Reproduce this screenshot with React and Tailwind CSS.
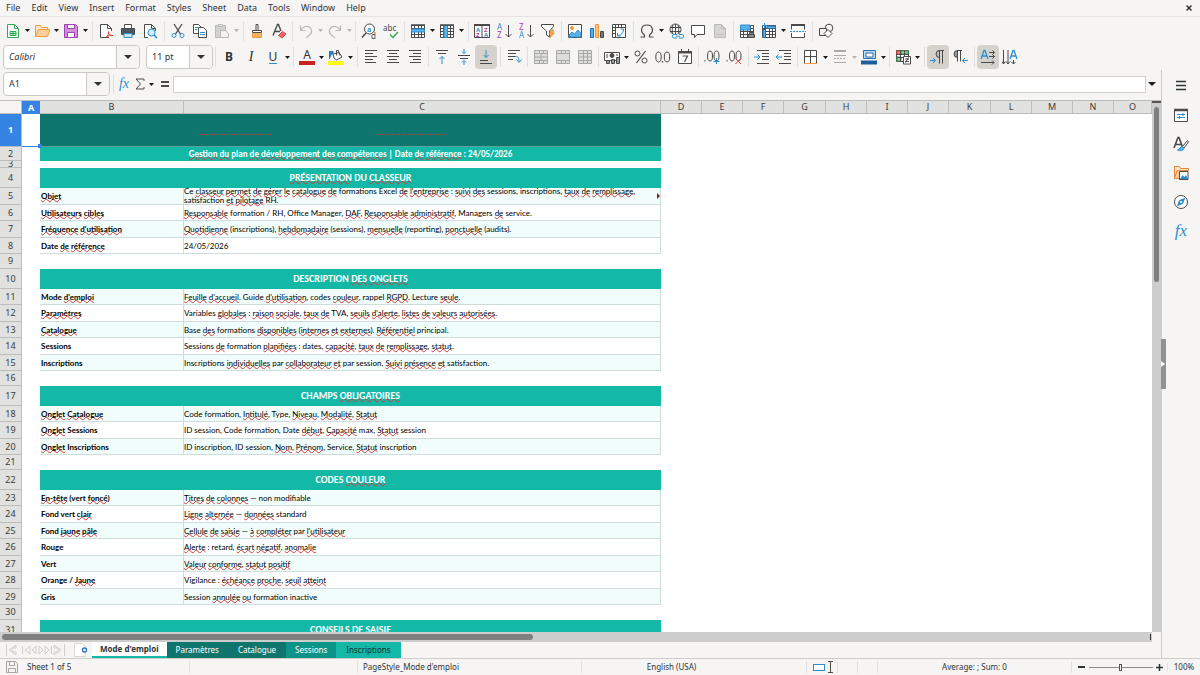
import { Fragment, useState } from "react";

const BLUE = "#2a8fd0";
const DARK = "#4a4a4a";
const GRAY = "#b9b9b7";
const ORANGE = "#ef9b3f";
const PURPLE = "#a33fb5";
const RED = "#e0403f";

const Svg = ({ children, color = DARK }) => (
  <svg viewBox="0 0 16 16" className="w-4 h-4 shrink-0" fill="none" stroke={color} strokeWidth="1">
    {children}
  </svg>
);

const Letter = ({ x, y, size = 8, color = DARK, bold, children }) => (
  <text x={x} y={y} fontSize={size} fill={color} stroke="none" fontWeight={bold ? 700 : 400} fontFamily="Noto Sans, sans-serif">
    {children}
  </text>
);

const gridLines = "M1.5 2.5h13v12h-13zM1.5 5.5h13M1.5 8.5h13M1.5 11.5h13M4.5 2.5v12M8.5 2.5v12M11.5 2.5v12";
const mergeLines = "M1.5 1.5h13v13h-13zM1.5 4.5h13M1.5 11.5h13M6.5 1.5v3M10.5 1.5v3M6.5 11.5v3M10.5 11.5v3";

const icons = {
  new: (
    <Svg color="#35a854">
      <path d="M2.5 1.5h7l4 4v9h-11z" fill="#fff" />
      <path d="M9.5 1.5v4h4" />
      <path d="M5 8.5h6v4H5zM5 10.5h6M8 8.5v4" fill="#bfe6c9" />
    </Svg>
  ),
  open: (
    <Svg color={ORANGE}>
      <path d="M1.5 13.5v-11h5l1 2h6v3" fill="#fde6c8" />
      <path d="M1.5 13.5l3-7h11.5l-2.5 7z" fill="#fbd09a" />
    </Svg>
  ),
  save: (
    <Svg color={PURPLE}>
      <path d="M1.5 1.5h11l2 2v11h-13z" fill="#cf8fdb" />
      <path d="M4.5 1.5h7v4h-7z" fill="#fff" />
      <path d="M4.5 9.5h7v5h-7z" fill="#fff" />
    </Svg>
  ),
  pdf: (
    <Svg>
      <path d="M11 14.5H2.5v-13h7l4 4V8" fill="#fff" />
      <path d="M9.5 1.5v4h4" />
      <path d="M8 14.5c2-2 3-4 2.5-6c0 3 2 4.5 4.5 4c-2-.5-5 0-7 2z" stroke={RED} />
    </Svg>
  ),
  print: (
    <Svg>
      <path d="M4.5 5V1.5h7V5" fill="#fff" />
      <path d="M1.5 5.5h13v6h-13z" fill="#4f565c" />
      <path d="M4 10.5h8v4H4z" fill="#cfe6f7" stroke={BLUE} />
    </Svg>
  ),
  preview: (
    <Svg>
      <path d="M6 14.5H2.5v-13h7l4 4V8" fill="#fff" />
      <path d="M9.5 1.5v4h4" />
      <circle cx="9.5" cy="9.5" r="3.5" fill="#d5ecfa" stroke={BLUE} />
      <path d="M12 12l3 3" stroke={BLUE} strokeWidth="1.5" />
    </Svg>
  ),
  cut: (
    <Svg>
      <path d="M4 1l6.5 10M12 1L5.5 11" strokeWidth="1.3" />
      <circle cx="4" cy="12.5" r="2" stroke={BLUE} />
      <circle cx="12" cy="12.5" r="2" stroke={BLUE} />
    </Svg>
  ),
  copy: (
    <Svg>
      <path d="M1.5 1.5h5l3 3v6h-8z" fill="#fff" />
      <path d="M6.5 4.5h5l3 3v7h-8z" fill="#fff" />
      <path d="M3 4.5h3M3 6.5h2M8 9.5h5M8 11.5h5" stroke={BLUE} />
    </Svg>
  ),
  paste: (
    <Svg color={GRAY}>
      <path d="M1.5 2.5h10v12h-10z" fill="#d0d0ce" />
      <path d="M4.5 1.5h4v2h-4z" fill="#eee" />
      <path d="M6.5 7.5h5l3 3v4h-8z" fill="#f2f2f0" />
    </Svg>
  ),
  clone: (
    <Svg>
      <path d="M7 1.5h2v6H7z" fill="#fff" />
      <path d="M3.5 7.5h9v2h-9z" fill="#fff" />
      <path d="M3.5 10v4.5h9V10M6 11.5v3M9 11.5v3" stroke={ORANGE} fill="#f7b566" />
    </Svg>
  ),
  clear: (
    <Svg>
      <path d="M2 12.5L6.5 1.5h1L10 8M4 8.5h5" strokeWidth="1.4" />
      <path d="M7.5 12.5l4-4 3.500 2.500-4 4z" fill="#f06a68" stroke={RED} />
    </Svg>
  ),
  undo: (
    <Svg color={GRAY}>
      <path d="M2.5 2.5v5h5M3 7c2-4 8-5 10-1s-1 6-5 9" strokeWidth="1.2" />
    </Svg>
  ),
  redo: (
    <Svg color={GRAY}>
      <path d="M13.5 2.5v5h-5M13 7c-2-4-8-5-10-1s1 6 5 9" strokeWidth="1.2" />
    </Svg>
  ),
  find: (
    <Svg>
      <circle cx="8.5" cy="6" r="5" fill="#fff" />
      <path d="M5 10l-4 4.5" strokeWidth="1.5" />
      <Letter x="6" y="8.5" size="7" color={BLUE} bold>a</Letter>
      <Letter x="10" y="15.5" size="8">d</Letter>
    </Svg>
  ),
  spell: (
    <Svg>
      <Letter x="0" y="8" size="8">abc</Letter>
      <path d="M7 11.5l3 3 5-5.5" stroke="#2fa84f" strokeWidth="1.3" />
    </Svg>
  ),
  row: (
    <Svg>
      <path d={gridLines} fill="#fff" />
      <path d="M1.5 6h13v3h-13z" fill="#5db1ea" stroke={BLUE} />
      <path d="M1 2h14" strokeWidth="1.5" />
    </Svg>
  ),
  col: (
    <Svg>
      <path d={gridLines} fill="#fff" />
      <path d="M5 2.5h3.5v12H5z" fill="#5db1ea" stroke={BLUE} />
      <path d="M1 2h14" strokeWidth="1.5" />
    </Svg>
  ),
  sort: (
    <Svg>
      <path d="M.5 1.5h15v13H.5zM8 1v14" fill="#fff" />
      <path d="M0 2h16" strokeWidth="2" />
      <Letter x="2" y="9" size="6" color={BLUE} bold>A</Letter>
      <Letter x="2" y="14" size="6" color={PURPLE} bold>Z</Letter>
      <Letter x="10" y="9" size="6" color={PURPLE} bold>Z</Letter>
      <Letter x="10" y="14" size="6" color={BLUE} bold>A</Letter>
    </Svg>
  ),
  az: (
    <Svg>
      <Letter x="1" y="7" size="8" color={BLUE}>A</Letter>
      <Letter x="1" y="15" size="8" color={PURPLE}>Z</Letter>
      <path d="M12.5 2v12M9.5 11l3 3 3-3" />
    </Svg>
  ),
  za: (
    <Svg>
      <Letter x="1" y="7" size="8" color={PURPLE}>Z</Letter>
      <Letter x="1" y="15" size="8" color={BLUE}>A</Letter>
      <path d="M12.5 2v12M9.5 11l3 3 3-3" />
    </Svg>
  ),
  filter: (
    <Svg>
      <path d="M1.5 1.5h12v2l-4 4.5v6l-3-2V8l-5-4.5z" fill="#fff" />
      <path d="M12 7l-3 4h2.5L9.5 15l5-5H12l2-3z" fill={ORANGE} stroke={ORANGE} />
    </Svg>
  ),
  image: (
    <Svg>
      <path d="M1.5 1.5h13v13h-13z" fill="#fff" />
      <circle cx="5" cy="5" r="1.5" fill={ORANGE} stroke={ORANGE} />
      <path d="M2 14v-2l3-3 2.5 2L11 7l3 3.5V14z" fill="#5db1ea" stroke={BLUE} />
    </Svg>
  ),
  chart: (
    <Svg>
      <path d="M1.5 5.5h3v9h-3z" fill="#5db1ea" stroke="#1f6fae" />
      <path d="M6.5 1.5h3v13h-3z" fill="#f9c079" stroke={ORANGE} />
      <path d="M11.5 8.5h3v6h-3z" fill="#777" />
    </Svg>
  ),
  pivot: (
    <Svg>
      <path d="M1.5 1.5h13v13h-13z" fill="#fff" />
      <path d="M1.5 4.5h13M4.5 1.5v13M7.5 2v2M10.5 2v2M2 7.5h2M2 10.5h2" />
      <path d="M6.5 10v3h3M12.5 8V6h-3M7 12.5c3 0 5-2 5.5-6" stroke={BLUE} />
    </Svg>
  ),
  omega: (
    <Svg>
      <path d="M1.5 14h4v-2C1 9 1.5 2 8 2s7 7 2.5 10v2h4" strokeWidth="1.2" />
    </Svg>
  ),
  link: (
    <Svg>
      <circle cx="7.5" cy="6.5" r="5.5" fill="#fff" />
      <path d="M2 4.5h11M2 8.5h11M7.5 1v11M5 2c-1 3-1 6 0 9M10 2c1 3 1 6 0 9" />
      <path d="M4 11h12v5H4z" fill="#f6f5f4" stroke="none" />
      <path d="M9 11.5H6a1.5 1.5 0 000 3.5h3M11 11.5h3a1.5 1.5 0 010 3.5h-3M8 13.2h4" stroke={BLUE} />
    </Svg>
  ),
  comment: (
    <Svg>
      <path d="M1.5 2.5h13v9H7l-2.5 3v-3h-3z" fill="#fff" />
    </Svg>
  ),
  doc: (
    <Svg color={GRAY}>
      <path d="M2.5 1.5h7l4 4v9h-11z" fill="#d6d6d4" />
      <path d="M4 11.5h8M9.5 1.5v4h4" />
    </Svg>
  ),
  range: (
    <Svg>
      <path d={gridLines} fill="#fff" />
      <path d="M1.5 2h9.5v5H1.5z" fill="#5db1ea" stroke={BLUE} />
      <path d="M9 11.5h6.5v3H9zM10.5 9.5h4v2h-4z" fill="#8a8f94" />
    </Svg>
  ),
  freeze: (
    <Svg>
      <path d={gridLines} fill="#fff" />
      <path d="M6 3h8.5v2.500H6zM2 6.5h2.500v8H2z" fill="#5db1ea" stroke="#1f6fae" />
      <path d="M3.5 0v5M1 2.5h5" stroke={BLUE} />
    </Svg>
  ),
  split: (
    <Svg>
      <path d="M1.5 6.5v-5h13v5M1.5 10v4.5h13V10" fill="#fff" />
      <path d="M1 2h14" strokeWidth="2" />
      <path d="M0 8.5h16" stroke={BLUE} strokeDasharray="2 1" />
    </Svg>
  ),
  shapes: (
    <Svg>
      <circle cx="11" cy="5" r="3.8" />
      <path d="M1.5 5.5h7v7h-7z" fill="#f6f5f4" />
      <path d="M10 6.5l4 4-4 4-4-4z" fill="#fff" />
    </Svg>
  ),
  left: <Svg><path d="M2 1.5h12M2 4.5h8M2 7.5h12M2 10.5h8M2 13.5h11" /></Svg>,
  center: <Svg><path d="M2 1.5h12M4 4.5h8M2 7.5h12M4 10.5h8M2 13.5h12" /></Svg>,
  right: <Svg><path d="M2 1.5h12M6 4.5h8M2 7.5h12M6 10.5h8M3 13.5h11" /></Svg>,
  top: (
    <Svg>
      <path d="M2 1.5h12M4 4.5h8" />
      <path d="M8 15V7.5M5.5 10L8 7.5 10.5 10" stroke={BLUE} />
    </Svg>
  ),
  middle: (
    <Svg>
      <path d="M2 6.5h12M4 9.5h8" />
      <path d="M8 0v4.5M6 2.5l2 2 2-2M8 16v-4.5M6 13.5l2-2 2 2" stroke={BLUE} />
    </Svg>
  ),
  bottom: (
    <Svg>
      <path d="M2 11.5h8M2 14.5h12" />
      <path d="M8 1v7.5M5.5 6L8 8.5 10.5 6" stroke={BLUE} />
    </Svg>
  ),
  wrap: (
    <Svg>
      <path d="M2 1.5h12M2 4.5h8M2 7.5h7M2 10.5h5" />
      <path d="M9 7.5c3 0 4 1 4 5M10.5 10.5l2.5 3 2.5-3" stroke={BLUE} />
    </Svg>
  ),
  merge1: <Svg color="#a9a9a7"><path d={mergeLines} fill="#dededc" /><path d="M1.5 8h13M8 4.5v7" /></Svg>,
  merge2: <Svg color="#a9a9a7"><path d={mergeLines} fill="#dededc" /></Svg>,
  merge3: <Svg color="#a9a9a7"><path d={mergeLines} fill="#dededc" /><path d="M1.5 8h13M6.5 4.5v7M10.5 4.5v7" /></Svg>,
  currency: (
    <Svg>
      <path d="M.5 3.5h15v8H.5z" fill="#fff" />
      <circle cx="8" cy="6.5" r="2" fill={DARK} />
      <path d="M3 5v4M13 5v2M2.5 11.5h3v3h-3zM7.5 10.5h3v4h-3zM12.5 8.5h3v6h-3z" fill="#999" />
    </Svg>
  ),
  percent: (
    <Svg>
      <circle cx="4.5" cy="4.5" r="2.5" />
      <circle cx="11.5" cy="11.5" r="2.5" />
      <path d="M12.5 2l-9 12" strokeWidth="1.2" />
    </Svg>
  ),
  number: (
    <Svg>
      <ellipse cx="3.5" cy="8" rx="2.7" ry="5" />
      <ellipse cx="12" cy="8" rx="2.7" ry="5" />
      <path d="M7.5 12v1.5" strokeWidth="1.3" />
    </Svg>
  ),
  date: (
    <Svg>
      <path d="M1.5 2.5h13v12h-13z" fill="#fff" />
      <path d="M1 3.5h14" strokeWidth="2" />
      <path d="M4.5 0v3M11.5 0v3" />
      <path d="M5.5 7h5l-3 6" strokeWidth="1.2" />
    </Svg>
  ),
  addDec: (
    <Svg>
      <ellipse cx="6" cy="7" rx="2.5" ry="5" />
      <ellipse cx="12.5" cy="7" rx="2.5" ry="5" />
      <path d="M1 11v1.5" />
      <path d="M12.5 9v6M9.5 12.5h6" stroke={BLUE} />
    </Svg>
  ),
  delDec: (
    <Svg>
      <ellipse cx="6" cy="7" rx="2.5" ry="5" />
      <ellipse cx="12.5" cy="7" rx="2.5" ry="5" />
      <path d="M1 11v1.5" />
      <path d="M9.5 9.5l5.5 5.5M15 9.5L9.5 15" stroke={RED} />
    </Svg>
  ),
  indent: (
    <Svg>
      <path d="M3 1.5h12M8 4.5h7M8 7.5h7M8 10.5h7M3 14.5h12" />
      <path d="M0 8h6M3.5 5.5L6 8l-2.5 2.5" stroke={BLUE} />
    </Svg>
  ),
  outdent: (
    <Svg>
      <path d="M3 1.5h12M8 4.5h7M8 7.5h7M8 10.5h7M3 14.5h12" />
      <path d="M0 8h6M2.5 5.5L0 8l2.5 2.5" stroke={BLUE} />
    </Svg>
  ),
  borders: (
    <Svg>
      <path d="M1.5 14.5v-13h12v13M7.5 1.5v13M1.5 7.5h12" fill="#fff" />
      <path d="M1 14.5h13" stroke={ORANGE} />
    </Svg>
  ),
  lineStyle: (
    <Svg color="#aaaaa8">
      <path d="M2 2h12" strokeWidth="2" />
      <path d="M2 6.5h12" />
      <path d="M2 9.5h12" strokeDasharray="2 1" />
      <path d="M2 13.5h12" />
    </Svg>
  ),
  lineColor: (
    <Svg color="#2b6ea8">
      <path d="M2.5 1.5h12v8h-12z" fill="#b9dcf5" />
      <path d="M5 4h7v4H5z" fill="#fff" />
      <path d="M0 11.500h16v4H0z" fill="#1c5f9c" stroke="none" />
    </Svg>
  ),
  conditional: (
    <Svg>
      <path d="M1.5 1.5h12v11h-12z" fill="#fff" />
      <path d="M2 2h4v3H2z" fill="#f7837c" stroke={RED} />
      <path d="M6 2h7v3H6zM2 8h4v4H2z" fill="#8fd19e" stroke="#35a854" />
      <path d="M5.5 1.5v11M9.5 1.5v11M1.5 5.5h12M1.5 8.5h12" />
      <path d="M8.5 7.5h7v7.5h-7z" fill="#fff" />
      <path d="M10 10h4M10 12.5h4M13.5 8.5l-3 5" />
    </Svg>
  ),
  ltr: (
    <Svg>
      <path d="M14 1.5H8.5M9.5 1.5v13M12.5 1.5v13" />
      <path d="M9.5 1.5a3.5 3.5 0 000 7z" fill="#bbb" />
      <path d="M0 11.5h5.5M3 9l2.5 2.5L3 14" stroke={BLUE} />
    </Svg>
  ),
  rtl: (
    <Svg>
      <path d="M10 1.5H5M5.5 1.5v11M8.5 1.5v11" />
      <path d="M5.5 1.5a3.5 3.5 0 000 7z" fill="#999" />
      <path d="M16 11.5h-5.5M13 9l-2.5 2.5L13 14" stroke={BLUE} />
    </Svg>
  ),
  horizontal: (
    <Svg>
      <path d="M1 10L4 1.5h1L8 10M2 7h5" stroke={BLUE} strokeWidth="1.3" />
      <path d="M9 3.5h5.500M12.5 1.5l2 2-2 2M9 7.5h5.500M12.5 5.5l2 2-2 2M1 13.5h13M12 11.5l2 2-2 2" />
    </Svg>
  ),
  vertical: (
    <Svg>
      <path d="M8 10l3-8.5h1L15 10M9 7h5" stroke={BLUE} strokeWidth="1.3" />
      <path d="M1.5 1v14M0 12.5L1.5 15l2-2.5M6 1v14M4 12.5L6 15l2-2.5M11.5 11v4M9.5 13l2 2 2-2" />
    </Svg>
  ),
};

// "|" and "||" are separators, "v" is a drop-down arrow, "x" a disabled one
const standardBar = [
  ["new", "v"], ["open", "v"], ["save", "v"], "||", "pdf", "print", "preview", "||",
  "cut", "copy", ["paste", "x"], "||", "clone", "clear", "|", ["undo", "x"], ["redo", "x"], "|",
  "find", "spell", "|", ["row", "v"], ["col", "v"], "||", "sort", "az", "za", "filter", "|",
  "image", "chart", "pivot", "||", ["omega", "v"], "link", "comment", "doc", "|",
  "range", ["freeze", "v"], "split", "||", "shapes",
];

const alignBar = [
  "||", "left", "center", "right", "|", "top", "middle", "bottom*", "||", "wrap", "|",
  "merge1", "merge2", "merge3", "|", ["currency", "v"], "percent", "number", "date", "|",
  "addDec", "delDec", "||", "indent", "outdent", "|", ["borders", "v"], ["lineStyle", "x"],
  ["lineColor", "v"], "|", ["conditional", "v"], "||", "ltr*", "rtl", "||", "horizontal*", "vertical",
];

function Arrow({ disabled }) {
  return (
    <span className="w-[7px] flex justify-center">
      <svg viewBox="0 0 5 3" className="w-[5px] h-[3px]" fill={disabled ? "#b5b5b3" : "#1a1a1a"}>
        <path d="M0 0h5L2.5 3z" />
      </svg>
    </span>
  );
}

function Sep({ wide }) {
  return (
    <span className={`${wide ? "w-1.5" : "w-[5px]"} h-5 flex justify-center shrink-0`}>
      <span className="w-px h-full bg-[#e1dfdd]" />
    </span>
  );
}

function Tool({ name, arrow, children }) {
  const active = name.endsWith("*");
  const key = name.replace("*", "");
  return (
    <button type="button" aria-label={key} className="flex items-center shrink-0">
      <span className={`w-[22px] h-6 rounded flex items-center justify-center ${active ? "bg-[#d5d1cd]" : ""}`}>
        {children || icons[key]}
      </span>
      {arrow && <Arrow disabled={arrow === "x"} />}
    </button>
  );
}

function Tools({ items }) {
  return items.map((item, i) => {
    if (item === "|" || item === "||") return <Sep key={i} wide={item === "||"} />;
    if (Array.isArray(item)) return <Tool key={i} name={item[0]} arrow={item[1]} />;
    return <Tool key={i} name={item} />;
  });
}

function Combo({ label, value, className, inputClass }) {
  const [text, setText] = useState(value);
  return (
    <div className={`h-6 shrink-0 flex rounded border border-[#cdc7c2] bg-white overflow-hidden ${className}`}>
      <input
        aria-label={label}
        value={text}
        onChange={(e) => setText(e.target.value)}
        className={`min-w-0 flex-1 pl-[5px] text-[9px] text-[#2e3436] outline-none ${inputClass || ""}`}
      />
      <button type="button" aria-label={`${label} list`} className="w-[23px] border-l border-[#cdc7c2] bg-[#f6f5f4] flex items-center justify-center">
        <svg viewBox="0 0 8 4" className="w-2 h-1" fill="#2e3436">
          <path d="M0 0h8L4 4z" />
        </svg>
      </button>
    </div>
  );
}

// words in [brackets] are flagged by the spell checker
const rows = [
  { n: 1, type: "banner", h: "h-[33px]" },
  { n: 2, type: "sub", h: "h-[14px]", text: "[Gestion] [du] plan [de] [développement] [des] [compétences] | Date [de] [référence] : 24/05/2026" },
  { n: 3, type: "gap", h: "h-[7px]" },
  { n: 4, type: "title", h: "h-5", text: "[PRÉSENTATION] DU [CLASSEUR]" },
  { n: 5, h: "h-[17px]", alt: true, a: "[Objet]", more: true, b: "Ce [classeur] [permet] [de] [gérer] [le] [catalogue] [de] formations Excel [de] [l'entreprise] : [suivi] [des] sessions, inscriptions, [taux] [de] [remplissage], satisfaction [et] [pilotage] RH." },
  { n: 6, h: "h-4", a: "[Utilisateurs] [cibles]", b: "[Responsable] formation / RH, Office Manager, [DAF], [Responsable] [administratif], Managers [de] service." },
  { n: 7, h: "h-[17px]", alt: true, a: "[Fréquence] [d'utilisation]", b: "[Quotidienne] (inscriptions), [hebdomadaire] (sessions), [mensuelle] (reporting), [ponctuelle] (audits)." },
  { n: 8, h: "h-4", a: "Date [de] [référence]", b: "24/05/2026" },
  { n: 9, type: "gap", h: "h-[15px]" },
  { n: 10, type: "title", h: "h-5", text: "DESCRIPTION [DES] [ONGLETS]" },
  { n: 11, h: "h-4", alt: true, a: "Mode [d'emploi]", b: "[Feuille] [d'accueil]. Guide [d'utilisation], codes [couleur], rappel [RGPD]. Lecture [seule]." },
  { n: 12, h: "h-[17px]", a: "[Paramètres]", b: "Variables [globales] : [raison] [sociale], [taux] [de] TVA, [seuils] [d'alerte], [listes] [de] [valeurs] [autorisées]." },
  { n: 13, h: "h-4", alt: true, a: "[Catalogue]", b: "Base [des] formations [disponibles] ([internes] [et] [externes]). [Référentiel] principal." },
  { n: 14, h: "h-[17px]", a: "Sessions", b: "Sessions [de] formation [planifiées] : dates, [capacité], [taux] [de] [remplissage], [statut]." },
  { n: 15, h: "h-4", alt: true, a: "Inscriptions", b: "Inscriptions [individuelles] par [collaborateur] [et] par session. [Suivi] [présence] [et] satisfaction." },
  { n: 16, type: "gap", h: "h-[15px]" },
  { n: 17, type: "title", h: "h-5", text: "CHAMPS [OBLIGATOIRES]" },
  { n: 18, h: "h-4", alt: true, a: "[Onglet] [Catalogue]", b: "Code formation, [Intitulé], Type, [Niveau], [Modalité], [Statut]" },
  { n: 19, h: "h-[17px]", a: "[Onglet] Sessions", b: "ID session, Code formation, Date [début], [Capacité] max, [Statut] session" },
  { n: 20, h: "h-4", alt: true, a: "[Onglet] Inscriptions", b: "ID inscription, ID session, [Nom], [Prénom], Service, [Statut] inscription" },
  { n: 21, type: "gap", h: "h-[15px]" },
  { n: 22, type: "title", h: "h-5", text: "CODES [COULEUR]" },
  { n: 23, h: "h-4", alt: true, a: "[En-tête] (vert [foncé])", b: "[Titres] [de] [colonnes] — non modifiable" },
  { n: 24, h: "h-[17px]", a: "Fond vert [clair]", b: "[Ligne] [alternée] — [données] standard" },
  { n: 25, h: "h-4", alt: true, a: "Fond [jaune] [pâle]", b: "[Cellule] [de] [saisie] — [à] [compléter] par [l'utilisateur]" },
  { n: 26, h: "h-[17px]", a: "Rouge", b: "[Alerte] : retard, [écart] [négatif], [anomalie]" },
  { n: 27, h: "h-4", alt: true, a: "Vert", b: "[Valeur] [conforme], [statut] [positif]" },
  { n: 28, h: "h-[17px]", a: "Orange / [Jaune]", b: "Vigilance : [échéance] [proche], [seuil] [atteint]" },
  { n: 29, h: "h-4", alt: true, a: "Gris", b: "Session [annulée] [ou] formation inactive" },
  { n: 30, type: "gap", h: "h-[15px]" },
  { n: 31, type: "title", h: "h-5", text: "CONSEILS DE SAISIE" },
];

function Spell({ text }) {
  return text.split(/[[\]]/).map((part, i) =>
    i % 2 ? (
      <span key={i} className="underline decoration-wavy decoration-1 decoration-[#d33a35] underline-offset-[-1px] [text-decoration-skip-ink:none]">
        {part}
      </span>
    ) : (
      <Fragment key={i}>{part}</Fragment>
    )
  );
}

function RowCells({ row }) {
  if (row.type === "gap") return <td colSpan={2} className="p-0" />;
  if (row.type === "banner") {
    return (
      <td colSpan={2} className="p-0 bg-[#0f766e] border-b border-[#5d9f9a]">
        <div className="flex gap-[106px] pl-40 pt-2">
          <span className="w-[71px] h-0.5 border-b border-dashed border-[#b83a30]" />
          <span className="w-[69px] h-0.5 border-b border-dashed border-[#b83a30]" />
        </div>
      </td>
    );
  }
  if (row.type === "title" || row.type === "sub") {
    return (
      <td
        colSpan={2}
        className={`p-0 bg-[#14b8a6] text-white text-center font-bold font-['Carlito','Lato',sans-serif] ${
          row.type === "title" ? "text-[10px] leading-3" : "text-[9px] leading-[10px]"
        }`}
      >
        <Spell text={row.text} />
      </td>
    );
  }
  const bg = row.alt ? "bg-[#f0fdfa]" : "bg-white";
  return (
    <>
      <td className={`p-0 pl-px border-r border-b border-[#cfdcdc] font-bold ${bg}`}>
        <Spell text={row.a} />
      </td>
      <td className={`p-0 border-r border-b border-[#cfdcdc] ${bg}`}>
        <div className={`h-3.5 flex items-center justify-between ${row.more ? "leading-[9px]" : ""}`}>
          <p className={row.more ? "w-[464px]" : ""}>
            <Spell text={row.b} />
          </p>
          {row.more && (
            <svg viewBox="0 0 3 6" className="w-[3px] h-1.5" fill="#7a1f1f">
              <path d="M0 0l3 3-3 3z" />
            </svg>
          )}
        </div>
      </td>
    </>
  );
}

const columns = ["D", "E", "F", "G", "H", "I", "J", "K", "L", "M", "N", "O"];

function Sheet() {
  const head = "p-0 h-[13px] border-r border-b border-[#bdbdbb] bg-[#e1e1df] font-normal";
  return (
    <table className="w-full table-fixed border-separate border-spacing-0 font-['Lato','Carlito',sans-serif] text-[8px] leading-[10px] text-black">
      <colgroup>
        <col className="w-[22px]" />
        <col className="w-[18px]" />
        <col className="w-[144px]" />
        <col className="w-[477px]" />
        {columns.slice(0, -1).map((c, i) => (
          <col key={c} className={i % 4 === 3 ? "w-[42px]" : "w-[41px]"} />
        ))}
        <col />
      </colgroup>
      <thead className="font-['Noto_Sans',sans-serif] text-[9px] leading-3 text-[#3c3c3c]">
        <tr>
          <th className="p-0 h-[13px] bg-[#f6f5f4] border-r border-b border-[#bdbdbb]" aria-label="Select all" />
          <th className="p-0 bg-[#3584e4] text-white font-bold">A</th>
          <th className={head}>B</th>
          <th className={head}>C</th>
          {columns.map((c) => (
            <th key={c} className={head}>{c}</th>
          ))}
        </tr>
      </thead>
      <tbody>
        {rows.map((row) => (
          <tr key={row.n}>
            <th
              className={`p-0 border-r border-b border-[#bdbdbb] font-['Noto_Sans',sans-serif] text-[9px] ${row.h} ${
                row.n === 1 ? "bg-[#3584e4] text-white font-bold" : "bg-[#e1e1df] text-[#3c3c3c] font-normal"
              }`}
            >
              <div className={`flex items-center justify-center overflow-hidden ${row.n === 3 ? "h-1.5" : "h-3"}`}>{row.n}</div>
            </th>
            <td className={`p-0 ${row.n === 1 ? "relative border-b border-[#3584e4]" : ""}`}>
              {row.n === 1 && <span className="absolute z-10 -right-0.5 -bottom-0.5 w-1 h-1 bg-[#3584e4]" />}
            </td>
            <RowCells row={row} />
            <td colSpan={12} className="p-0" />
          </tr>
        ))}
      </tbody>
    </table>
  );
}

const menus = ["File", "Edit", "View", "Insert", "Format", "Styles", "Sheet", "Data", "Tools", "Window", "Help"];

const tabs = [
  { name: "Mode d'emploi", style: "bg-white text-[#2e3436] font-bold border-b-2 border-[#14b8a6] px-2" },
  { name: "Paramètres", style: "bg-[#0f766e] text-white px-[9px]" },
  { name: "Catalogue", style: "bg-[#0f766e] text-white px-2.5" },
  { name: "Sessions", style: "bg-[#0d9488] text-white px-[9px]" },
  { name: "Inscriptions", style: "bg-[#14b8a6] text-[#12302d] px-2.5" },
];

function Sidebar() {
  return (
    <aside className="w-[39px] shrink-0 border-l border-[#cfcdcb] relative flex flex-col items-center gap-[13px] pt-2">
      <button type="button" aria-label="Sidebar settings">
        <Svg color="#2e3436"><path d="M3 3.5h10M3 7.5h10M3 11.5h10" strokeWidth="1.5" /></Svg>
      </button>
      <button type="button" aria-label="Properties">
        <Svg>
          <path d="M1.5 2.5h13v12h-13z" fill="#fff" />
          <path d="M1 3h14" strokeWidth="2.5" />
          <path d="M4 7.5h8M4 10.5h8M10 6v3M6.5 9v3" stroke={BLUE} />
        </Svg>
      </button>
      <button type="button" aria-label="Styles">
        <Svg>
          <path d="M1 12L5 1.5h1L9.5 11M3 8.5h5" strokeWidth="1.6" />
          <path d="M14.5 4.5l-5 6 1.5 1.5 4.5-6z" fill="#fff" />
          <path d="M9.5 10.5c-3 0-2 3-5 3.5 3 1.5 6 .5 6.5-2z" fill="#5db1ea" stroke={BLUE} />
        </Svg>
      </button>
      <button type="button" aria-label="Gallery">
        <Svg color="#e8873a">
          <path d="M1.5 13.5v-12h5l1 2h8v2h-11z" fill="#fde6c8" />
          <path d="M1.5 13.5l2.5-8h4v8z" fill="#fbd09a" />
          <path d="M6.5 6.5H15v8H6.5z" fill="#fff" stroke={DARK} />
          <path d="M7 14l2.5-4 2 2 1.5-2 2 4z" fill="#2a8fd0" stroke="none" />
        </Svg>
      </button>
      <button type="button" aria-label="Navigator">
        <Svg>
          <circle cx="8" cy="8" r="6.5" fill="#fff" />
          <path d="M11.5 4.5l-2 5-5 2 2-5z" fill="#2a8fd0" stroke={BLUE} />
          <circle cx="8" cy="8" r="1" fill="#fff" stroke="none" />
        </Svg>
      </button>
      <button type="button" aria-label="Functions" className="font-['Liberation_Serif',serif] italic text-[17px] leading-4 text-[#2a8fd0]">
        fx
      </button>
      <button
        type="button"
        aria-label="Hide sidebar"
        className="absolute left-[-1px] top-[269px] w-[5px] h-[50px] bg-[#929292] flex items-center"
      >
        <svg viewBox="0 0 4 6" className="w-1 h-1.5" fill="#fff"><path d="M0 0l4 3-4 3z" /></svg>
      </button>
    </aside>
  );
}

export default function App() {
  const [formula, setFormula] = useState("");
  const [zoom, setZoom] = useState(50);

  return (
    <div className="h-screen flex flex-col overflow-hidden bg-[#f6f5f4] font-['Noto_Sans',sans-serif] text-[9px] text-[#2e3436]">
      <header className="h-[17px] shrink-0 flex items-center justify-between pl-1.5 pr-2 border-b border-[#e6e4e2]">
        <nav className="flex gap-[11px] leading-3">
          {menus.map((m) => (
            <button key={m} type="button">{m}</button>
          ))}
        </nav>
        <button type="button" aria-label="Close">
          <svg viewBox="0 0 6 6" className="w-1.5 h-1.5" stroke="#2e3436" strokeWidth="1.5">
            <path d="M.5 .5l5 5M5.5 .5l-5 5" />
          </svg>
        </button>
      </header>

      <div role="toolbar" aria-label="Standard" className="h-[27px] shrink-0 flex items-center pl-0.5">
        <Tools items={standardBar} />
      </div>

      <div role="toolbar" aria-label="Formatting" className="h-[26px] shrink-0 flex items-center pl-[3px]">
        <Combo label="Font name" value="Calibri" className="w-[137px] mr-1.5" inputClass="italic" />
        <Combo label="Font size" value="11 pt" className="w-[67px]" />
        <Sep />
        <Tool name="bold"><b className="text-[12px] leading-4">B</b></Tool>
        <Tool name="italic"><i className="text-[14px] leading-4 font-['Liberation_Serif',serif]">I</i></Tool>
        <Tool name="underline" arrow="v"><span className="text-[12px] leading-[13px] border-b border-[#2a8fd0]">U</span></Tool>
        <Sep />
        <Tool name="font color" arrow="v"><span className="w-4 h-4 text-center text-[12px] leading-3 border-b-4 border-[#c9211e]">A</span></Tool>
        <Tool name="highlight" arrow="v">
          <Svg>
            <path d="M5 5l6-1.5 3 4.5-5.5 3L6 9z" fill="#fff" />
            <path d="M8.5 6.5V1.5h2l1 5" />
            <path d="M1.5 9.5v-7l3.5 0v2l-2 1z" fill="#2a8fd0" stroke="#1f6fae" />
            <path d="M0 12h16v4H0z" fill="#ff0" stroke="none" />
          </Svg>
        </Tool>
        <Tools items={alignBar} />
      </div>

      <div className="flex-1 min-h-0 flex">
        <main className="flex-1 min-w-0 flex flex-col">
          <div className="h-[30px] shrink-0 flex items-center pl-[3px] pb-0.5">
            <Combo label="Name Box" value="A1" className="w-[107px]" />
            <Sep wide />
            <button type="button" aria-label="Function Wizard" className="w-4 font-['Liberation_Serif',serif] italic text-[14px] leading-4 text-[#2a8fd0]">
              fx
            </button>
            <button type="button" aria-label="Select Function" className="flex items-center ml-[3px]">
              <svg viewBox="0 0 10 12" className="w-2.5 h-3" fill="none" stroke={DARK}>
                <path d="M9 3V1H1l4.5 5L1 11h8V9" />
              </svg>
              <span className="pl-[3px]"><Arrow /></span>
            </button>
            <button type="button" aria-label="Formula" className="ml-1.5 w-2 h-1.5 border-y-2 border-[#4a4a4a]" />
            <input
              aria-label="Input line"
              value={formula}
              onChange={(e) => setFormula(e.target.value)}
              className="flex-1 min-w-0 ml-1 h-[17px] px-1 bg-white border border-[#d4d1ce] outline-none"
            />
            <button type="button" aria-label="Expand Formula Bar" className="w-[15px] pr-1 flex justify-center">
              <svg viewBox="0 0 8 4" className="w-2 h-1" fill="#1a1a1a"><path d="M0 0h8L4 4z" /></svg>
            </button>
          </div>

          <div className="flex-1 min-h-0 flex border-t border-[#bdbdbb]">
            <div className="flex-1 min-w-0 overflow-hidden bg-white">
              <Sheet />
            </div>
            <div className="w-[9px] shrink-0 bg-[#cdcdcd] pt-1 px-0.5 border-t-2 border-[#555]">
              <div className="h-1/3 rounded-full bg-[#7f7f7f]" />
            </div>
          </div>

          <div className="h-2.5 shrink-0 mr-[9px] bg-[#cdcdcd] flex items-center justify-between pl-0.5 pr-px">
            <div className="w-[531px] h-1.5 rounded-full bg-[#7f7f7f]" />
            <div className="w-px h-1.5 bg-[#333]" />
          </div>

          <div className="h-4 shrink-0 flex pl-1">
            <div className="flex items-center w-[70px]">
              <svg viewBox="0 0 62 12" className="w-[62px] h-3" fill="none" stroke="#cfcfcd">
                <path d="M2.5 0v12M12 1L5 6l7 5V8H8V4h4zM18.5 2v8M26 2l-5 4 5 4zM32 2l-4 4 4 4zM35 2l4 4-4 4zM41 2l4 4-4 4zM47.5 2v8M50 1l7 5-7 5V8h4V4h-4zM60.5 0v12" />
              </svg>
            </div>
            <button type="button" aria-label="Add sheet" className="w-[18px]">
              <svg viewBox="0 0 14 14" className="w-3.5 h-3.5" fill="#fff" stroke="#dad8d6">
                <path d="M.5 .5h8l3 3v10H.5z" />
                <circle cx="10.5" cy="7" r="2" stroke="#2a6fc0" strokeWidth="1.3" />
              </svg>
            </button>
            {tabs.map((t) => (
              <button key={t.name} type="button" className={`h-full shrink-0 text-[8px] leading-3 ${t.style}`}>
                {t.name}
              </button>
            ))}
          </div>
        </main>
        <Sidebar />
      </div>

      <footer className="h-[17px] shrink-0 flex items-center border-t border-[#cfcdcb] text-[8px] leading-3">
        <div className="w-[190px] flex items-center gap-[9px] pl-1.5 border-r border-[#e1dfdd]">
          <svg viewBox="0 0 12 12" className="w-3 h-3" fill="none" stroke="#a5a5a3">
            <path d="M.5 .5h9l2 2v9H.5zM3.5 .5v4h5v-4M2.5 11.5v-4h7v4" />
          </svg>
          <span>Sheet 1 of 5</span>
        </div>
        <div className="w-[168px] h-3 border-r border-[#e1dfdd]" />
        <div className="flex-1 pl-[5px] border-r border-[#e1dfdd]">PageStyle_Mode d'emploi</div>
        <div className="w-[179px] text-center">English (USA)</div>
        <div className="w-[46px] h-3 border-r border-[#e1dfdd]" />
        <div className="w-[31px] h-3 flex items-center gap-[3px] pl-1.5 border-r border-[#e1dfdd]">
          <span className="w-3 h-[7px] border border-[#2a8fd0] bg-white" />
          <svg viewBox="0 0 5 12" className="w-[5px] h-3" stroke={DARK} fill="none">
            <path d="M0 .5h5M0 11.5h5M2.5 0v12" />
          </svg>
        </div>
        <div className="w-5 h-3 border-r border-[#e1dfdd]" />
        <div className="w-5 h-3 border-r border-[#e1dfdd]" />
        <div className="w-[194px] text-center border-r border-[#e1dfdd]">Average: ; Sum: 0</div>
        <div className="w-24 flex items-center justify-between pl-1.5 pr-1 border-r border-[#e1dfdd]">
          <button type="button" aria-label="Zoom out" className="w-[7px] h-0.5 bg-[#2e3436]" />
          <input
            type="range"
            aria-label="Zoom"
            value={zoom}
            onChange={(e) => setZoom(e.target.value)}
            className="w-16 h-2 appearance-none bg-transparent [&::-webkit-slider-runnable-track]:h-px [&::-webkit-slider-runnable-track]:bg-[#8b8b89] [&::-webkit-slider-thumb]:appearance-none [&::-webkit-slider-thumb]:w-[3px] [&::-webkit-slider-thumb]:h-[7px] [&::-webkit-slider-thumb]:mt-[-3px] [&::-webkit-slider-thumb]:border [&::-webkit-slider-thumb]:border-[#555] [&::-webkit-slider-thumb]:bg-[#f6f5f4]"
          />
          <button type="button" aria-label="Zoom in">
            <svg viewBox="0 0 7 7" className="w-[7px] h-[7px]" stroke="#2e3436" strokeWidth="1.5"><path d="M0 3.5h7M3.5 0v7" /></svg>
          </button>
        </div>
        <div className="w-8 text-center">100%</div>
      </footer>
    </div>
  );
}
